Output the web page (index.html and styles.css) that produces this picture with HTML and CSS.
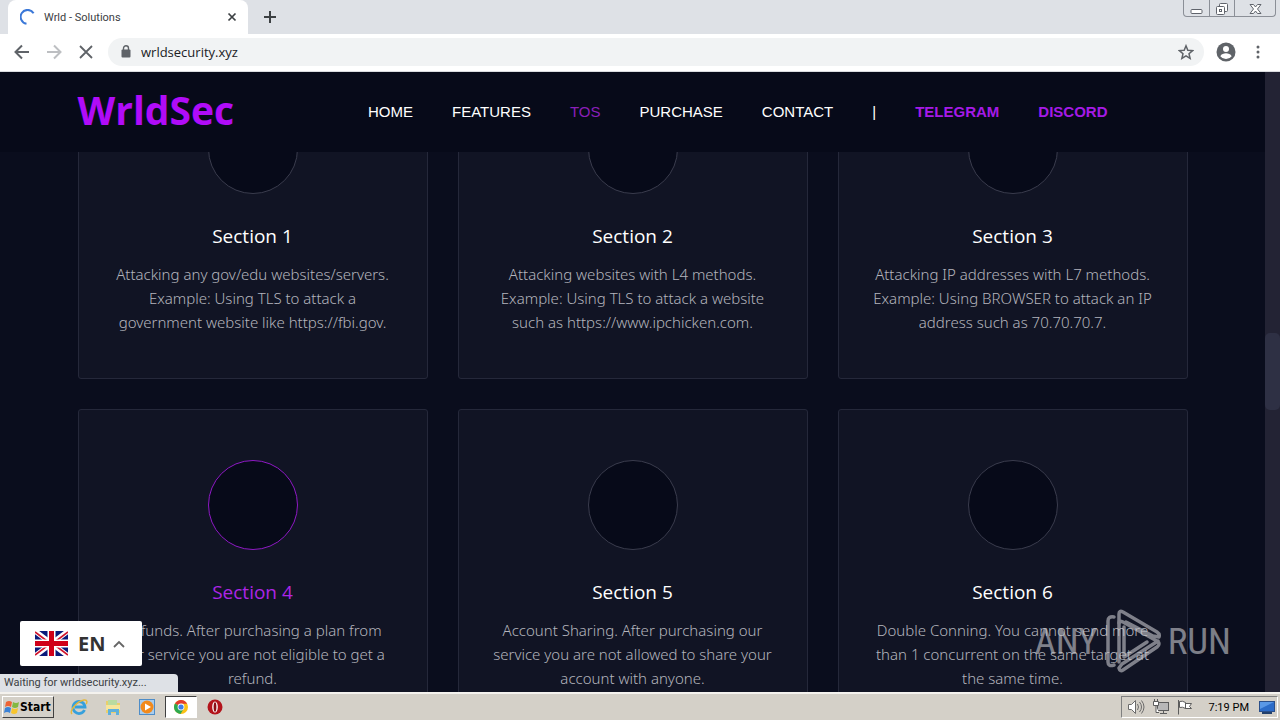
FILE: index.html
```html
<!DOCTYPE html>
<html lang="en">
<head>
    <meta charset="UTF-8">
    <meta name="viewport" content="width=device-width, initial-scale=1.0">
    <title>Wrld - Solutions</title>
    <link rel="stylesheet" href="styles.css">
</head>
<body>
    <div class="tab-strip">
        <div class="tab">
            <svg class="spinner" width="16" height="16" viewBox="0 0 16 16"><path d="M13.6 4.2A7 7 0 1 0 6.5 14.8" fill="none" stroke="#3b78d8" stroke-width="2"/></svg>
            <span class="tab-title">Wrld - Solutions</span>
            <button class="icon-button" aria-label="Close tab">
                <svg width="10" height="10" viewBox="0 0 10 10"><path d="M1.5 1.5l7 7M8.5 1.5l-7 7" stroke="#3c4043" stroke-width="1.7"/></svg>
            </button>
        </div>
        <button class="icon-button new-tab" aria-label="New tab">
            <svg width="12" height="12" viewBox="0 0 12 12"><path d="M6 0v12M0 6h12" stroke="#3c4043" stroke-width="2"/></svg>
        </button>
        <div class="window-buttons">
            <button aria-label="Minimize"><svg width="13" height="15" viewBox="0 0 13 15"><rect x="1" y="8.5" width="11" height="4" rx="1" fill="#fff" stroke="#60646c"/></svg></button>
            <button aria-label="Restore"><svg width="14" height="15" viewBox="0 0 14 15"><rect x="4.500" y="2.500" width="8" height="8" rx="1" fill="#fff" stroke="#60646c"/><rect x="1.500" y="5.500" width="8" height="8" rx="1" fill="#fff" stroke="#60646c"/><rect x="4.500" y="8.500" width="2" height="2" fill="none" stroke="#60646c"/></svg></button>
            <button class="wide" aria-label="Close"><svg width="13" height="15" viewBox="0 0 13 15"><path d="M1 3.500h3.500l2 2.500 2-2.500H12L8.500 8l3.500 4.500H8.500l-2-2.500-2 2.500H1L4.500 8z" fill="#fff" stroke="#60646c"/></svg></button>
        </div>
    </div>

    <div class="toolbar">
        <button class="icon-button" aria-label="Back">
            <svg width="16" height="16" viewBox="0 0 16 16"><path d="M15 8H2M8 1.500L1.500 8 8 14.500" fill="none" stroke="#5f6368" stroke-width="2"/></svg>
        </button>
        <button class="icon-button" aria-label="Forward">
            <svg width="16" height="16" viewBox="0 0 16 16"><path d="M1 8h13M8 1.500L14.500 8 8 14.500" fill="none" stroke="#bdbfc2" stroke-width="2"/></svg>
        </button>
        <button class="icon-button" aria-label="Stop">
            <svg width="16" height="16" viewBox="0 0 16 16"><path d="M2 2l12 12M14 2L2 14" stroke="#5f6368" stroke-width="1.8"/></svg>
        </button>
        <div class="address-bar">
            <svg width="10" height="13" viewBox="0 0 10 13"><rect x="0.500" y="4.500" width="9" height="8" rx="1" fill="#5f6368"/><path d="M2.500 5V3.300a2.500 2.500 0 0 1 5 0V5" fill="none" stroke="#5f6368" stroke-width="1.400"/></svg>
            <input type="text" value="wrldsecurity.xyz" aria-label="Address">
            <button class="icon-button" aria-label="Bookmark this page">
                <svg width="16" height="16" viewBox="0 0 16 16"><path d="M8 1.800l1.800 4.400 4.800.4-3.600 3.100 1.100 4.600L8 11.800l-4.100 2.500L5 9.700 1.400 6.600l4.800-.4z" fill="none" stroke="#5f6368" stroke-width="1.500"/></svg>
            </button>
        </div>
        <button class="icon-button profile" aria-label="Profile">
            <svg width="20" height="20" viewBox="0 0 20 20"><circle cx="10" cy="10" r="9.500" fill="#5f6368"/><circle cx="10" cy="7" r="3" fill="#fff"/><path d="M4.300 14.200c1-2 3.500-2.900 5.700-2.900s4.700.9 5.700 2.900A7 7 0 0 1 10 17a7 7 0 0 1-5.700-2.800z" fill="#fff"/></svg>
        </button>
        <button class="icon-button menu" aria-label="Menu">
            <svg width="4" height="16" viewBox="0 0 4 16"><circle cx="2" cy="3" r="1.500" fill="#5f6368"/><circle cx="2" cy="8" r="1.500" fill="#5f6368"/><circle cx="2" cy="13" r="1.500" fill="#5f6368"/></svg>
        </button>
    </div>

    <div class="viewport">
        <div class="page">
            <header>
                <div class="container header-row">
                    <a class="logo" href="#">WrldSec</a>
                    <nav>
                        <a href="#home">HOME</a>
                        <a href="#features">FEATURES</a>
                        <a href="#tos" class="active">TOS</a>
                        <a href="#purchase">PURCHASE</a>
                        <a href="#contact">CONTACT</a>
                        <span>|</span>
                        <a href="#telegram" class="social">TELEGRAM</a>
                        <a href="#discord" class="social">DISCORD</a>
                    </nav>
                </div>
            </header>
            <main>
                <div class="container cards">
                    <article class="card">
                        <div class="circle"></div>
                        <h4>Section 1</h4>
                        <p>Attacking any gov/edu websites/servers.<br>Example: Using TLS to attack a<br>government website like https://fbi.gov.</p>
                    </article>
                    <article class="card">
                        <div class="circle"></div>
                        <h4>Section 2</h4>
                        <p>Attacking websites with L4 methods.<br>Example: Using TLS to attack a website<br>such as https://www.ipchicken.com.</p>
                    </article>
                    <article class="card">
                        <div class="circle"></div>
                        <h4>Section 3</h4>
                        <p>Attacking IP addresses with L7 methods.<br>Example: Using BROWSER to attack an IP<br>address such as 70.70.70.7.</p>
                    </article>
                    <article class="card selected">
                        <div class="circle"></div>
                        <h4>Section 4</h4>
                        <p>Refunds. After purchasing a plan from<br>our service you are not eligible to get a<br>refund.</p>
                    </article>
                    <article class="card">
                        <div class="circle"></div>
                        <h4>Section 5</h4>
                        <p>Account Sharing. After purchasing our<br>service you are not allowed to share your<br>account with anyone.</p>
                    </article>
                    <article class="card">
                        <div class="circle"></div>
                        <h4>Section 6</h4>
                        <p>Double Conning. You cannot send more<br>than 1 concurrent on the same target at<br>the same time.</p>
                    </article>
                </div>
            </main>
        </div>
        <div class="scrollbar"><div class="thumb"></div></div>

        <button class="language">
            <svg width="33" height="25" viewBox="0 0 33 25">
                <rect width="33" height="25" fill="#0a1a7a"/>
                <path d="M0 0l33 25M33 0L0 25" stroke="#fff" stroke-width="5"/>
                <path d="M0 1l14 10.500M33 1L19 11.500M0 24l14-10.500M33 24L19 13.500" stroke="#d0142c" stroke-width="1.600"/>
                <path d="M16.500 0v25M0 12.500h33" stroke="#fff" stroke-width="8"/>
                <path d="M16.500 0v25M0 12.500h33" stroke="#d00018" stroke-width="5"/>
            </svg>
            <span>EN</span>
            <svg width="12" height="8" viewBox="0 0 12 8"><path d="M1 7l5-5 5 5" fill="none" stroke="#666" stroke-width="1.800"/></svg>
        </button>
        <div class="status">Waiting for wrldsecurity.xyz...</div>
        <div class="watermark">
            <span>ANY</span>
            <svg width="56" height="66" viewBox="0 0 56 66" fill="none" stroke="currentColor" stroke-width="3.500" stroke-linejoin="round" stroke-linecap="round">
                <path d="M9 9Q3 8 3 13v41q0 5 6 3"/>
                <path d="M14 54V6q0-4 4-2l34 20q3 2 2 5l-6-1-27-14"/>
                <path d="M14 15q0-3 4-1l34 19q4 3 0 6L18 62q-3 2-4-2l3-4 36-23"/>
                <path d="M19 19v30l23-15"/>
            </svg>
            <span>RUN</span>
        </div>
    </div>

    <footer class="taskbar">
        <button class="start">
            <svg width="16" height="16" viewBox="0 0 16 16"><path d="M2 3q3-2 6 0L7 8Q4 6 1 8z" fill="#ed6335"/><path d="M9 3q3 2 6 0l-1 5q-3 2-6 0z" fill="#83b840"/><path d="M1 9q3-2 6 0l-1 5q-3-2-6 0z" fill="#3b82d6"/><path d="M8 9q3 2 6 0l-1 5q-3 2-6 0z" fill="#f8c52c"/></svg>
            Start
        </button>
        <button class="task" aria-label="Internet Explorer">
            <svg width="18" height="18" viewBox="0 0 18 18"><path d="M14.500 12A6 6 0 1 1 15 9H5" fill="none" stroke="#36a0dc" stroke-width="2.800"/><path d="M2 16C-1 13 7 3 14 2c4-.5 3 3 2 4" fill="none" stroke="#e5b83c" stroke-width="1.400"/></svg>
        </button>
        <button class="task" aria-label="Explorer">
            <svg width="18" height="18" viewBox="0 0 18 18"><path d="M2 3h5l1 2h8v10H2z" fill="#e9cf6b"/><path d="M4 2h9v5H4z" fill="#b9dba0"/><path d="M2 7h14v5H2z" fill="#f6e59b"/><path d="M4 17v-6h11v6h-3v-3H7v3z" fill="#5eb0dc"/></svg>
        </button>
        <button class="task" aria-label="Media Player">
            <svg width="18" height="18" viewBox="0 0 18 18"><rect x="1.500" y="1.500" width="15" height="15" fill="#a9cdee" stroke="#4e8dc8"/><circle cx="9" cy="9" r="6.500" fill="#f28a1c"/><path d="M7 5.500l6 3.500-6 3.500z" fill="#fff"/></svg>
        </button>
        <button class="task open" aria-label="Chrome">
            <svg width="14" height="14" viewBox="0 0 14 14"><circle cx="7" cy="7" r="7" fill="#fbc116"/><path d="M7 7L1 3.400A7 7 0 0 1 13.100 3.700H7z" fill="#e33b2e"/><path d="M7 7L1 3.400A7 7 0 0 0 6.500 14L9.900 8.600z" fill="#2da94f"/><circle cx="7" cy="7" r="3.400" fill="#fff"/><circle cx="7" cy="7" r="2.600" fill="#3f7ee8"/></svg>
        </button>
        <button class="task" aria-label="Opera">
            <svg width="16" height="16" viewBox="0 0 16 16"><circle cx="8" cy="8" r="7.500" fill="#b3131b"/><ellipse cx="8" cy="8" rx="2.800" ry="5.500" fill="#fff"/><ellipse cx="8" cy="8" rx="1.400" ry="4.800" fill="#8c0d14"/></svg>
        </button>
        <div class="tray">
            <svg width="18" height="16" viewBox="0 0 18 16" fill="#fff" stroke="#6b6b6b"><path d="M1.500 5.500h3l4-4v13l-4-4h-3z"/><path d="M10.500 5q2 3 0 6M12.500 3q4 5 0 10M14.500 1.500q5 6.500 0 13" fill="none"/></svg>
            <svg width="16" height="16" viewBox="0 0 16 16" fill="#fff" stroke="#5c5c5c"><rect x="4.500" y="3.500" width="11" height="8" fill="#b8b8b8"/><path d="M7 14.500h7M10.500 12v2"/><path d="M.5 2.500h5v4h-5zM1.500 0v2M4.500 0v2M3 7v6.500h3"/></svg>
            <svg width="16" height="16" viewBox="0 0 16 16" fill="#fff" stroke="#5c5c5c"><path d="M1.500 1v14.500"/><path d="M2.500 2.500q3-1 6 1v6q-3-2-6-1zM8.500 4.500h6l-2 3 2 2h-6z"/></svg>
            <span>7:19 PM</span>
            <svg width="16" height="13" viewBox="0 0 16 13"><rect x="0.500" y="0.500" width="15" height="10" fill="#2c6cc8" stroke="#2a4f8a"/><path d="M1 1h14L1 8z" fill="#5a98e6"/><path d="M3 12h10" stroke="#22406c" stroke-width="2"/></svg>
        </div>
    </footer>
</body>
</html>
```
FILE: styles.css
```css
* {
    box-sizing: border-box;
}
body {
    margin: 0;
    height: 100vh;
    display: flex;
    flex-direction: column;
    overflow: hidden;
    font-family: "Open Sans", "Noto Sans", sans-serif;
    background: #0a0d1d;
}
button {
    padding: 0;
    border: none;
    background: none;
    font-family: inherit;
    cursor: pointer;
}
svg {
    display: block;
    flex-shrink: 0;
}
a {
    text-decoration: none;
}

/* browser */
.tab-strip {
    height: 34px;
    flex-shrink: 0;
    display: flex;
    align-items: center;
    padding-left: 8px;
    background: #dee1e6;
}
.tab {
    width: 240px;
    height: 34px;
    display: flex;
    align-items: center;
    gap: 8px;
    padding: 0 11px 0 12px;
    background: white;
    border-radius: 8px 8px 0 0;
}
.tab-title {
    flex: 1;
    font-family: Roboto, sans-serif;
    font-size: 11px;
    color: #3c4043;
}
.icon-button {
    display: flex;
    align-items: center;
    justify-content: center;
}
.new-tab {
    margin-left: 16px;
}
.window-buttons {
    display: flex;
    align-self: flex-start;
    margin-left: auto;
    margin-right: 4px;
    border: 1px solid #8b8f97;
    border-top: none;
    border-radius: 0 0 4px 4px;
}
.window-buttons button {
    width: 25px;
    height: 16px;
    display: flex;
    align-items: center;
    justify-content: center;
}
.window-buttons button + button {
    border-left: 1px solid #8b8f97;
}
.window-buttons .wide {
    width: 41px;
}
.toolbar {
    height: 38px;
    flex-shrink: 0;
    display: flex;
    align-items: center;
    gap: 16px;
    padding: 0 18px 2px 14px;
    background: white;
    border-bottom: 1px solid #dadce0;
}
.address-bar {
    flex: 1;
    height: 28px;
    display: flex;
    align-items: center;
    gap: 10px;
    margin-left: -2px;
    padding: 0 10px 0 13px;
    background: #f1f3f4;
    border-radius: 14px;
}
.address-bar input {
    flex: 1;
    min-width: 0;
    padding: 0;
    border: none;
    outline: none;
    background: none;
    font-family: inherit;
    font-size: 13px;
    color: #202124;
}
.profile {
    margin-left: -4px;
    margin-right: 4px;
}
.menu {
    margin-right: 2px;
}

/* web page */
.viewport {
    flex: 1;
    min-height: 0;
    display: flex;
    position: relative;
    overflow: hidden;
}
.page {
    flex: 1;
    display: flex;
    flex-direction: column;
    overflow: hidden;
}
.container {
    width: 100%;
    max-width: 1110px;
    margin: 0 auto;
}
header {
    flex-shrink: 0;
    background: #070a19;
}
.header-row {
    height: 80px;
    display: flex;
    align-items: center;
    justify-content: space-between;
    padding-right: 80px;
    padding-bottom: 2px;
}
.logo {
    font-size: 39px;
    font-weight: bold;
    line-height: 72px;
    padding-bottom: 2px;
    color: #b00cf8;
}
nav {
    display: flex;
    gap: 39px;
    font-family: "Liberation Sans", Arial, sans-serif;
    font-size: 15px;
    color: white;
}
nav a {
    color: white;
}
nav .active {
    color: #8a1fb8;
}
nav .social {
    font-weight: bold;
    color: #a51ae6;
}
main {
    flex: 1;
    min-height: 0;
    overflow: hidden;
}
/* the list is scrolled part way under the header */
.cards {
    display: grid;
    grid-template-columns: repeat(3, 1fr);
    gap: 30px;
    margin-top: -99px;
}
.card {
    height: 326px;
    padding: 50px 10px 0;
    background: #111424;
    border: 1px solid #25283a;
    border-radius: 3px;
    text-align: center;
}
.circle {
    width: 90px;
    height: 90px;
    margin: 0 auto 30px;
    background: #070a19;
    border: 1px solid #3a3c4d;
    border-radius: 50%;
}
.card h4 {
    margin: 0 0 14px;
    font-size: 19px;
    font-weight: normal;
    line-height: 24px;
    color: white;
}
.card p {
    margin: 0;
    font-family: "Noto Sans", "Open Sans", sans-serif;
    font-size: 15px;
    font-weight: 300;
    line-height: 24px;
    color: #b4b5bd;
}
.selected .circle {
    border-color: #8e19c4;
}
.selected h4 {
    color: #ac25e6;
}
.scrollbar {
    width: 15px;
    flex-shrink: 0;
    background: #232334;
}
.thumb {
    height: 77px;
    margin-top: 261px;
    background: #2e3044;
    border-radius: 5px;
}
.language {
    position: absolute;
    left: 20px;
    bottom: 26px;
    height: 45px;
    display: flex;
    align-items: center;
    gap: 10px;
    padding: 0 17px 0 15px;
    background: white;
    border-radius: 2px;
    font-size: 20px;
    font-weight: bold;
    color: #333;
}
.language span + svg {
    margin-left: -2px;
}
.status {
    position: absolute;
    left: 0;
    bottom: 0;
    width: 178px;
    height: 18px;
    padding-left: 4px;
    background: #dee1e6;
    border-radius: 0 4px 0 0;
    font-family: Roboto, sans-serif;
    font-size: 11px;
    line-height: 18px;
    color: #3c4043;
}
.watermark {
    position: absolute;
    right: 49px;
    bottom: 18px;
    display: flex;
    align-items: center;
    gap: 7px;
    font-family: "Roboto Condensed", Roboto, sans-serif;
    font-size: 37px;
    color: #c8c9ce;
    opacity: 0.6;
}

/* taskbar */
.taskbar {
    height: 28px;
    flex-shrink: 0;
    display: flex;
    align-items: center;
    gap: 2px;
    padding: 0 2px;
    background: #d4d0c8;
    border-top: 2px solid #f4f2ee;
}
.start {
    width: 52px;
    height: 22px;
    display: flex;
    align-items: center;
    margin-right: 7px;
    padding-left: 1px;
    border: 1px solid;
    border-color: white #404040 #404040 white;
    font-family: "DejaVu Sans Condensed", "DejaVu Sans", sans-serif;
    font-size: 12px;
    font-weight: bold;
}
.task {
    width: 32px;
    height: 22px;
    display: flex;
    align-items: center;
    justify-content: center;
}
.task.open {
    background: white;
    border: 1px solid;
    border-color: #404040 white white #404040;
}
.tray {
    height: 22px;
    display: flex;
    align-items: center;
    gap: 8px;
    margin-left: auto;
    padding: 0 2px 0 5px;
    border: 1px solid;
    border-color: #808080 white white #808080;
    font-family: Roboto, sans-serif;
    font-size: 11px;
    color: black;
}
.tray span {
    padding: 0 2px 0 8px;
}
```
